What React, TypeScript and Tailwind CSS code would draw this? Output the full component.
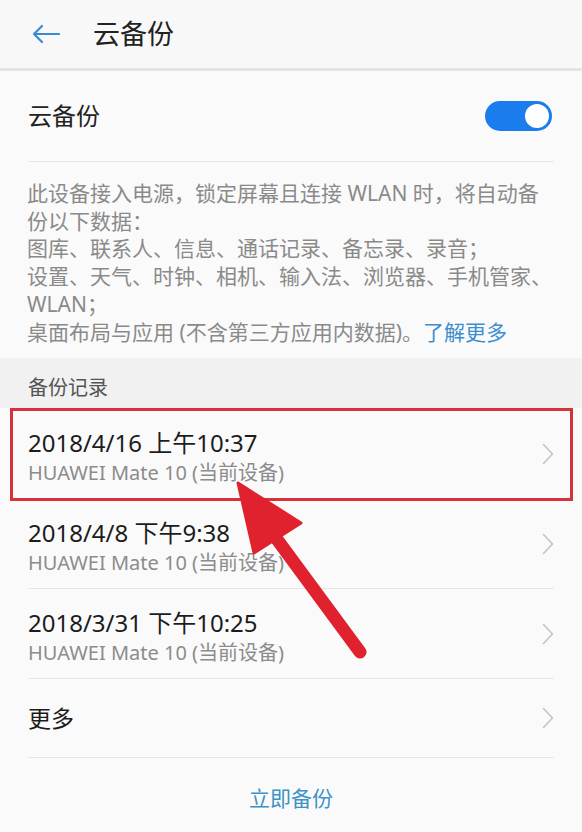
const font = "font-['Noto_Sans','Noto_Sans_CJK_SC',sans-serif]"

const records = [
  { time: "2018/4/16 上午10:37", device: "HUAWEI Mate 10 (当前设备)" },
  { time: "2018/4/8 下午9:38", device: "HUAWEI Mate 10 (当前设备)" },
  { time: "2018/3/31 下午10:25", device: "HUAWEI Mate 10 (当前设备)" },
]

const Chevron = () => (
  <svg width="12" height="22" viewBox="0 0 12 22" fill="none" className="shrink-0">
    <path d="M1.5 1.5 L10.5 11 L1.5 20.5" stroke="#c4c4c4" strokeWidth="1.6" strokeLinecap="round" strokeLinejoin="round" />
  </svg>
)

const App = () => {
  return (
    <div className={`relative w-[582px] h-[832px] overflow-hidden bg-[#fafafa] ${font}`}>
      {/* header */}
      <div className="flex h-[68px] items-center pl-[31px] bg-[#f8f8f8]">
        <svg width="30" height="20" viewBox="0 0 30 20" fill="none">
          <path d="M28 10 H3 M11 2 L3 10 L11 18" stroke="#3a8ad0" strokeWidth="2.2" strokeLinecap="round" strokeLinejoin="round" />
        </svg>
        <span className="ml-[32px] text-[27px] text-[#222]">云备份</span>
      </div>
      <div className="h-[3px] bg-[#e4e4e4]" />

      {/* toggle row */}
      <div className="mx-[28px] flex h-[91px] items-center justify-between border-b border-[#e6e6e6]">
        <span className="text-[24px] text-[#222]">云备份</span>
        <div className="mr-[2px] flex h-[30px] w-[67px] items-center justify-end rounded-full bg-[#1b7ced] pr-[3px]">
          <div className="h-[24px] w-[24px] rounded-full bg-white" />
        </div>
      </div>

      {/* description */}
      <div className="px-[27px] pt-[18px] pb-[12px] text-[21px] leading-[27.7px] text-[#8a8a8a] whitespace-nowrap">
        <div>此设备接入电源，锁定屏幕且连接 WLAN 时，将自动备</div>
        <div>份以下数据：</div>
        <div>图库、联系人、信息、通话记录、备忘录、录音；</div>
        <div>设置、天气、时钟、相机、输入法、浏览器、手机管家、</div>
        <div>WLAN；</div>
        <div>
          桌面布局与应用 (不含第三方应用内数据)。<span className="text-[#3b8fd0]">了解更多</span>
        </div>
      </div>

      {/* section label */}
      <div className="flex h-[50px] items-end bg-[#f1f1f1] px-[28px] pb-[5px]">
        <span className="text-[20px] text-[#555]">备份记录</span>
      </div>

      {/* records */}
      {records.map((r, i) => (
        <div key={r.time} className="relative">
          <div className={`mx-[28px] flex items-center justify-between ${i === 0 ? "h-[91px]" : "h-[90px] border-b border-[#e6e6e6]"}`}>
            <div className="flex flex-col pt-[8px]">
              <span className="text-[24px] leading-[30px] text-[#1c1c1c]">{r.time}</span>
              <span className="text-[20px] leading-[30px] text-[#8c8c8c]">{r.device}</span>
            </div>
            <Chevron />
          </div>
          {i === 0 && (
            <div className="absolute left-[10px] right-[9px] top-0 bottom-[-2px] border-[3px] border-[#d6323c]" />
          )}
        </div>
      ))}

      <div className="mx-[28px] flex h-[79px] items-center justify-between border-b border-[#e6e6e6]">
        <span className="text-[23px] text-[#1c1c1c]">更多</span>
        <Chevron />
      </div>

      <div className="flex h-[84px] items-center justify-center pb-[2px]">
        <span className="text-[21px] text-[#3d93c7]">立即备份</span>
      </div>

      {/* annotation arrow */}
      <svg className="absolute left-0 top-0 pointer-events-none" width="582" height="832" viewBox="0 0 582 832">
        <path d="M276 538 L360 652" stroke="#e0222e" strokeWidth="13" strokeLinecap="round" />
        <path d="M238 483 L301 523 L254 553 Z" fill="#e0222e" stroke="#e0222e" strokeWidth="3" strokeLinejoin="round" />
      </svg>
    </div>
  )
}

export default App
